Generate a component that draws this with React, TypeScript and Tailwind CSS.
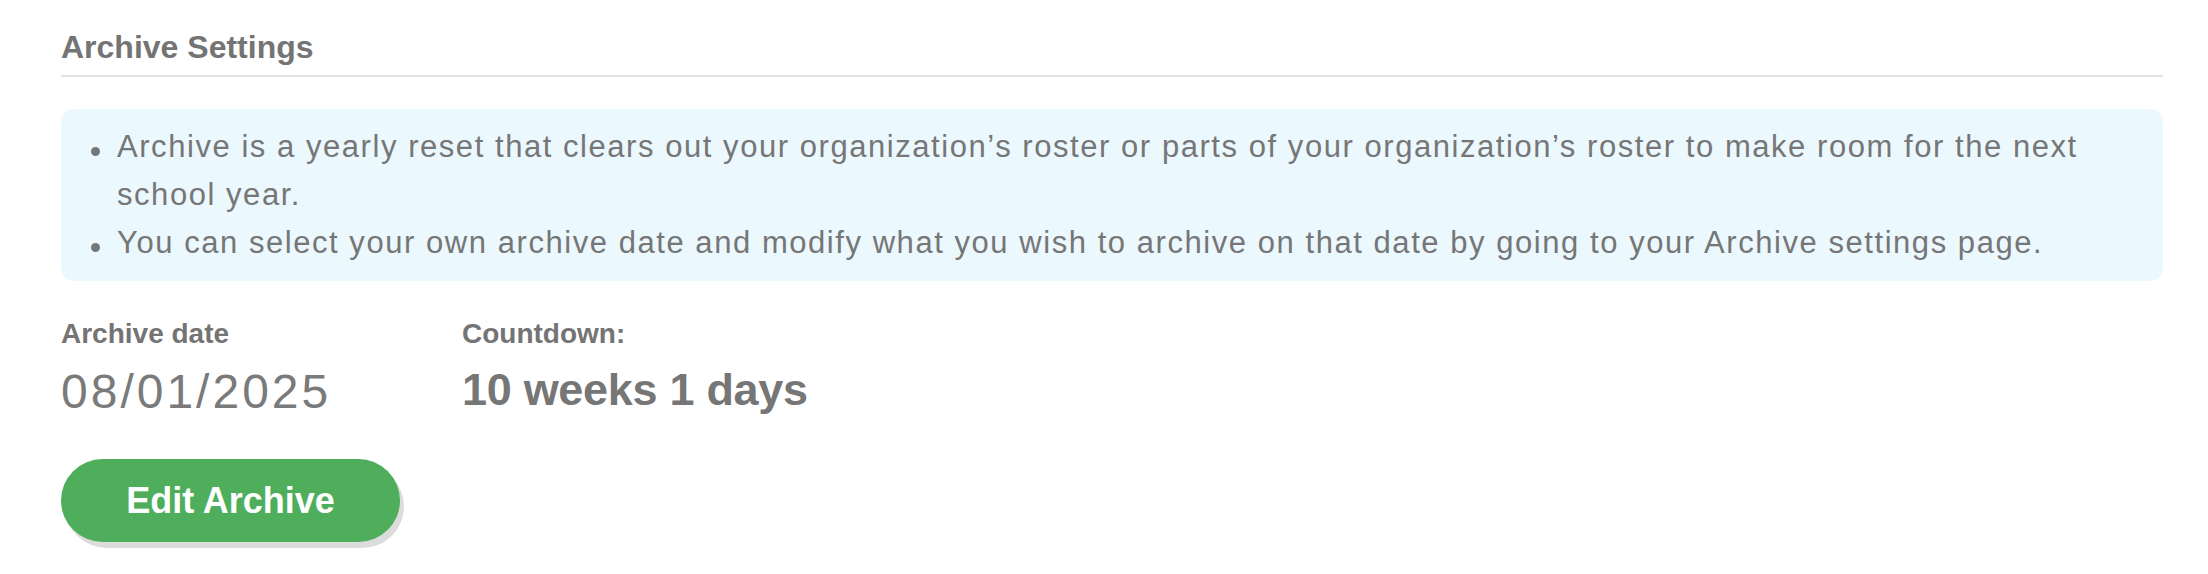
import React from "react";

const font = { fontFamily: '"Liberation Sans", Arial, sans-serif' };

function Bullet() {
  return (
    <span className="w-[26px] shrink-0">
      <span className="mt-[24px] block h-[9px] w-[9px] rounded-full bg-[#767676]" />
    </span>
  );
}

export default function App() {
  return (
    <div className="w-[2208px] min-h-[574px] bg-white pl-[61px] pr-[45px] text-[#767676]" style={font}>
      <div className="pt-[27px] pb-[8px] border-b-2 border-[#e2e2e2]">
        <h2 className="text-[32px] leading-[40px] font-bold text-[#747474]">Archive Settings</h2>
      </div>

      <div className="mt-[32px] rounded-[13px] bg-[#ebf8fe] pl-[30px] pr-[28px] pt-[14px] pb-[14px]">
        <ul className="text-[31px] leading-[48px] tracking-[1.55px] text-[#767676]">
          <li className="flex">
            <Bullet />
            <span className="flex-1">
              Archive is a yearly reset that clears out your organization’s roster or parts of your organization’s roster to make room for the next school year.
            </span>
          </li>
          <li className="flex">
            <Bullet />
            <span className="flex-1">
              You can select your own archive date and modify what you wish to archive on that date by going to your Archive settings page.
            </span>
          </li>
        </ul>
      </div>

      <div className="mt-[37px] flex">
        <div className="w-[401px] flex flex-col">
          <div className="text-[28px] leading-[32px] font-bold text-[#747474]">Archive date</div>
          <div className="mt-[14px] text-[48px] leading-[56px] tracking-[3px] text-[#7a7a7a]">08/01/2025</div>
        </div>
        <div className="flex flex-col">
          <div className="text-[28px] leading-[32px] font-bold text-[#747474]">Countdown:</div>
          <div className="mt-[12px] text-[45px] leading-[56px] font-bold tracking-[-0.3px] text-[#767676]">10 weeks 1 days</div>
        </div>
      </div>

      <button className="mt-[39px] flex h-[83px] w-[339px] items-center justify-center rounded-full bg-[#4fae5c] text-[36px] font-bold text-white shadow-[4px_6px_0_#dcdcdc]">
        Edit Archive
      </button>
    </div>
  );
}
